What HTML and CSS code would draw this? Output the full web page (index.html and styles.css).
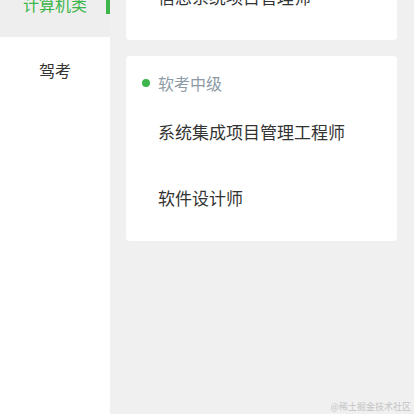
FILE: index.html
```html
<!DOCTYPE html>
<html lang="zh-CN">
<head>
<meta charset="utf-8">
<link rel="stylesheet" href="styles.css">
</head>
<body>
<div class="page">
  <nav class="sidebar">
    <ul class="side-list">
      <li class="side-item active">计算机类<span class="bar"></span></li>
      <li class="side-item">驾考</li>
    </ul>
  </nav>
  <main class="content">
    <div class="cards">
      <section class="card">
        <div class="card-head"><span class="dot"></span>软考高级</div>
        <ul class="items">
          <li class="item">信息系统项目管理师</li>
        </ul>
      </section>
      <section class="card">
        <div class="card-head"><span class="dot"></span>软考中级</div>
        <ul class="items">
          <li class="item">系统集成项目管理工程师</li>
          <li class="item">软件设计师</li>
        </ul>
      </section>
    </div>
  </main>
</div>
<div class="watermark">@稀土掘金技术社区</div>
</body>
</html>
```

FILE: styles.css
```css
* { box-sizing: border-box; }
html, body {
  margin: 0;
  padding: 0;
  width: 414px;
  height: 414px;
  overflow: hidden;
  background: #f0f0f0;
  font-family: "Noto Sans CJK SC", "Noto Sans", sans-serif;
}
ul { list-style: none; margin: 0; padding: 0; }
.page {
  display: flex;
  height: 414px;
  overflow: hidden;
}
.sidebar {
  width: 110px;
  flex: none;
  background: #ffffff;
  overflow: hidden;
}
.side-list {
  margin-top: -29px;
}
.side-item {
  position: relative;
  height: 66px;
  display: flex;
  align-items: center;
  justify-content: center;
  font-size: 16px;
  color: #333333;
  background: #ffffff;
}
.side-item.active {
  background: #eeeeee;
  color: #3cb64a;
}
.bar {
  position: absolute;
  right: 0;
  top: 23px;
  width: 4px;
  height: 20px;
  background: #3cb64a;
}
.content {
  flex: 1;
  overflow: hidden;
  padding: 0 17px 0 16px;
}
.cards {
  margin-top: -79px;
  display: flex;
  flex-direction: column;
  gap: 16px;
}
.card {
  background: #ffffff;
  border-radius: 4px;
  padding: 16px 0 11px;
}
.card-head {
  display: flex;
  align-items: center;
  height: 22px;
  padding-left: 16px;
  font-size: 16px;
  color: #8d9ba6;
}
.dot {
  width: 8px;
  height: 8px;
  border-radius: 50%;
  background: #3cb64a;
  margin-right: 8px;
}
.items {
  margin-top: 4px;
}
.item {
  height: 66px;
  display: flex;
  align-items: center;
  padding-left: 32px;
  font-size: 17px;
  color: #333333;
}
.watermark {
  position: absolute;
  right: 3px;
  bottom: 1px;
  font-size: 9px;
  line-height: 12px;
  color: #c4c4c4;
}
```
